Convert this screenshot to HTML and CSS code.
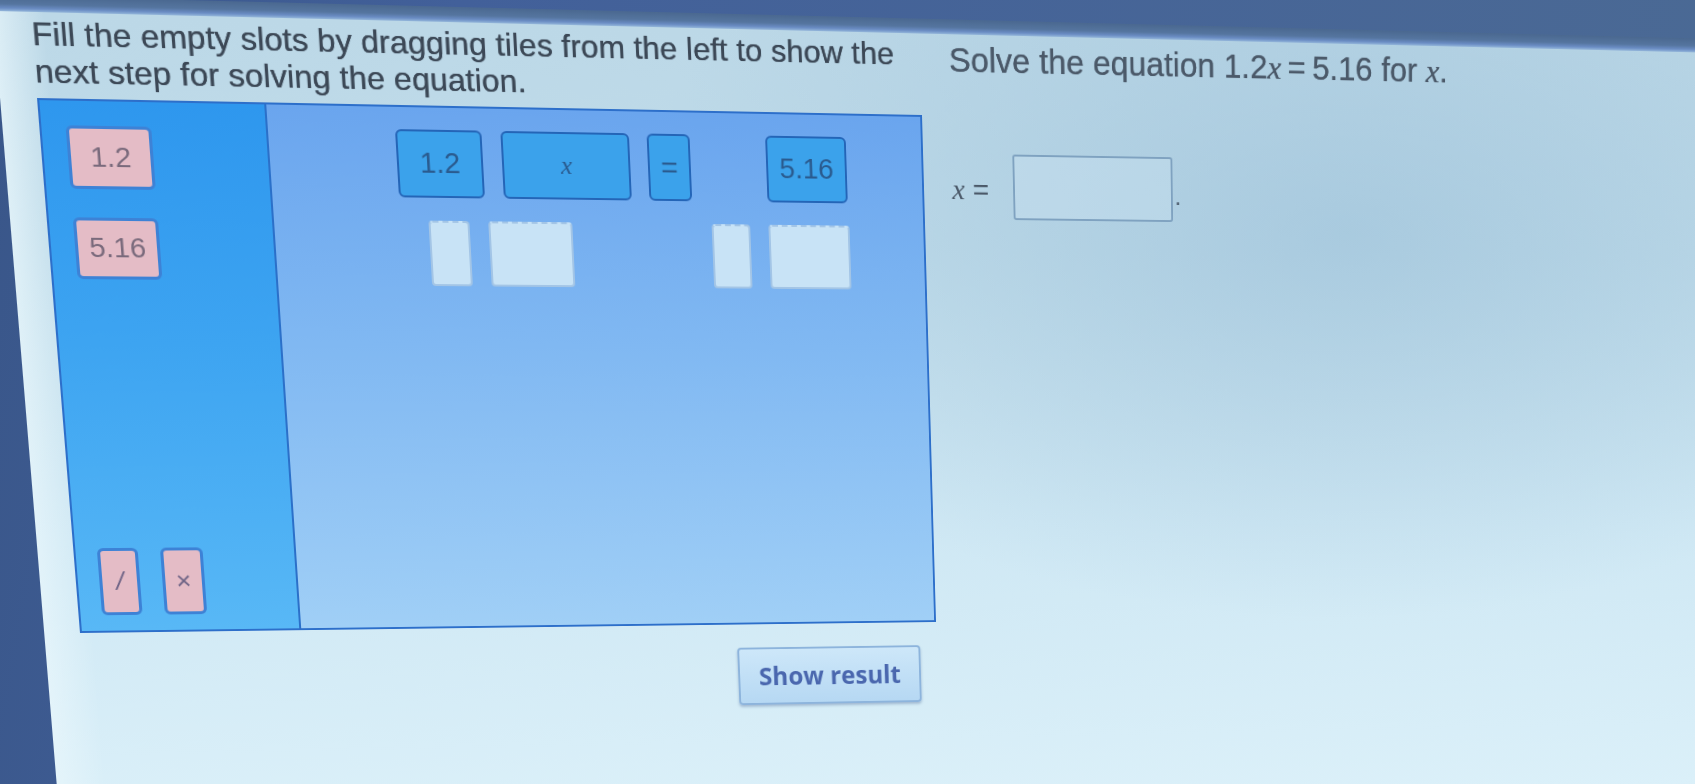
FILE: index.html
```html
<!DOCTYPE html>
<html lang="en">
<head>
<meta charset="utf-8">
<title>Solve the equation</title>
<link rel="stylesheet" href="styles.css">
</head>
<body>
<div class="viewport">
<div class="photo">
  <div class="topband"></div>
  <main class="screen">
    <section class="left-col">
      <p class="instructions">Fill the empty slots by dragging tiles from the left to show the next step for solving the equation.</p>
      <div class="board">
        <div class="tray">
          <div class="tray-top">
            <div class="tile tile-pink tile-num">1.2</div>
            <div class="tile tile-pink tile-num tile-num2">5.16</div>
          </div>
          <div class="tray-ops">
            <div class="tile tile-pink tile-op"><span class="slash">/</span></div>
            <div class="tile tile-pink tile-op tile-op2">×</div>
          </div>
        </div>
        <div class="workspace">
          <div class="eq-row">
            <div class="tile tile-blue t-coef">1.2</div>
            <div class="tile tile-blue t-var"><i class="var">x</i></div>
            <div class="tile tile-blue t-eq">=</div>
            <div class="tile tile-blue t-rhs">5.16</div>
          </div>
          <div class="slot-row">
            <div class="slot s-op"></div>
            <div class="slot s-num"></div>
            <div class="slot s-op s-op2"></div>
            <div class="slot s-num s-num2"></div>
          </div>
        </div>
      </div>
      <div class="actions"><button class="show-result" type="button">Show result</button></div>
    </section>
    <section class="right-col">
      <p class="prompt">Solve the equation <span class="math">1.2<i class="var">x</i>&thinsp;=&thinsp;5.16</span> for <i class="var">x</i>.</p>
      <div class="answer">
        <span class="answer-label"><i class="var">x</i> =</span>
        <span class="answer-box"></span>
        <span class="period">.</span>
      </div>
    </section>
  </main>
</div>
</div>
</body>
</html>
```

FILE: styles.css
```css
html, body {
  margin: 0;
  height: 100%;
  overflow: hidden;
}

body {
  background: linear-gradient(100deg, #395689 0%, #42609a 25%, #4b6a94 100%);
  font-family: "Liberation Sans", Arial, sans-serif;
}

.viewport {
  width: 100vw;
  height: 100vh;
  overflow: hidden;
}

/* the photographed screen: flat layout, projected to match the camera angle */
.photo {
  width: 1800px;
  height: 840px;
  display: flex;
  flex-direction: column;
  transform-origin: 37px 98px;
  transform: matrix3d(1.055942, 0.020284, 0, 0.00006321,
                      0.083023, 1.032963, 0, 0.00006161,
                      0, 0, 1, 0,
                      0, 0, 0, 1);
  filter: blur(0.7px);
}

.topband {
  flex: none;
  height: 15px;
  background: linear-gradient(to bottom, #4a6890 0, #55759f 8px, #6a8cc4 12px, #93b6da 15px);
}

.screen {
  flex: 1;
  margin-left: 2px;
  padding-left: 35px;
  display: flex;
  align-items: flex-start;
  background:
    linear-gradient(to right, rgba(232, 246, 251, 0.75) 0, rgba(232, 246, 251, 0) 48px),
    radial-gradient(ellipse 760px 420px at 1380px 200px, rgba(150, 188, 214, 0.55), rgba(150, 188, 214, 0) 100%),
    linear-gradient(to bottom, #bcd8e7 0, #c0dcea 220px, #cfe8f4 520px, #dbf0f9 100%);
}

.left-col {
  flex: none;
  width: 885px;
}

.instructions {
  margin: 2.6px 0 0;
  font-size: 32px;
  line-height: 36.5px;
  color: #3c4856;
  text-shadow: 0 0 0.7px #3c4856;
}

.board {
  box-sizing: border-box;
  height: 535px;
  margin-top: 7.4px;
  border: 2px solid #2d6fca;
  display: flex;
}

.tray {
  width: 216px;
  padding: 24px 0 16px;
  border-right: 2px solid #2b70c9;
  background: linear-gradient(to bottom, #2e97ee 0, #3da4f1 45%, #58b8f6 100%);
  display: flex;
  flex-direction: column;
  justify-content: space-between;
}

.tray-top {
  padding-left: 23px;
  display: flex;
  flex-direction: column;
  gap: 28px;
}

.tray-ops {
  padding-left: 21px;
  display: flex;
  gap: 22px;
}

.tile {
  box-sizing: border-box;
  display: flex;
  align-items: center;
  justify-content: center;
  border-radius: 6px;
}

.tile-pink {
  background: #e4bcc6;
  border: 3px solid #3d82d6;
  color: #7a6a7c;
  font-size: 28px;
}

.tile-num {
  width: 82px;
  height: 62px;
}

.tile-num2 {
  height: 61px;
}

.tile-op {
  width: 40px;
  height: 69px;
  font-size: 26px;
  color: #6f6486;
}

.tile-op2 {
  width: 42px;
}

.slash {
  font-style: italic;
}

.workspace {
  flex: 1;
  padding-top: 22px;
  background: linear-gradient(to bottom, #6aa5ee 0, #80b8f2 45%, #a0cff6 100%);
}

.eq-row {
  display: flex;
  margin-left: 125px;
}

.tile-blue {
  height: 68px;
  background: #3ba2eb;
  border: 2px solid #2465b7;
  color: #2a5b8f;
  font-size: 29px;
}

.t-coef { width: 86px; }
.t-var { width: 130px; margin-left: 19px; font-size: 26px; }
.t-eq { width: 44px; margin-left: 18px; font-size: 30px; }
.t-rhs { width: 84px; margin-left: 78px; }

.var {
  font-family: "Liberation Serif", "Times New Roman", serif;
  font-style: italic;
}

.slot-row {
  display: flex;
  margin: 23px 0 0 153px;
}

.slot {
  box-sizing: border-box;
  height: 66px;
  background: #c8e3f6;
  border: 2px solid #a3c5e6;
  border-top-style: dashed;
  border-radius: 4px;
}

.s-op { width: 41px; }
.s-num { width: 85px; margin-left: 19px; }
.s-op2 { width: 40px; margin-left: 143px; }
.s-num2 { margin-left: 19px; }

.actions {
  display: flex;
  justify-content: flex-end;
  padding-right: 18px;
  margin-top: 25px;
}

.show-result {
  width: 197px;
  height: 62px;
  padding: 0;
  border: 2px solid #8db4dc;
  border-radius: 4px;
  background: linear-gradient(to bottom, #cde7f9, #b6d8f3);
  box-shadow: 0 2px 3px rgba(60, 90, 140, 0.35);
  font-family: "Open Sans", "DejaVu Sans", sans-serif;
  font-weight: 700;
  font-size: 26px;
  color: #4a67ae;
}

.right-col {
  flex: none;
  margin-left: 30px;
  padding-top: 7.6px;
}

.prompt {
  margin: 0;
  font-size: 34.5px;
  line-height: 36.5px;
  color: #4b5969;
  white-space: nowrap;
  text-shadow: 0 0 0.7px #4b5969;
}

.answer {
  display: flex;
  align-items: center;
  height: 67.5px;
  margin-top: 78.4px;
}

.answer-label {
  width: 48px;
  padding-top: 6px;
  font-size: 30px;
  color: #4b5969;
  white-space: nowrap;
}

.answer-box {
  box-sizing: border-box;
  width: 173px;
  height: 67.5px;
  margin-left: 17px;
  border: 2px solid #7fa2c0;
  border-radius: 3px;
  background: rgba(205, 230, 244, 0.35);
}

.period {
  margin-top: 14px;
  margin-left: 2px;
  font-size: 26px;
  color: #4b5969;
}
```
